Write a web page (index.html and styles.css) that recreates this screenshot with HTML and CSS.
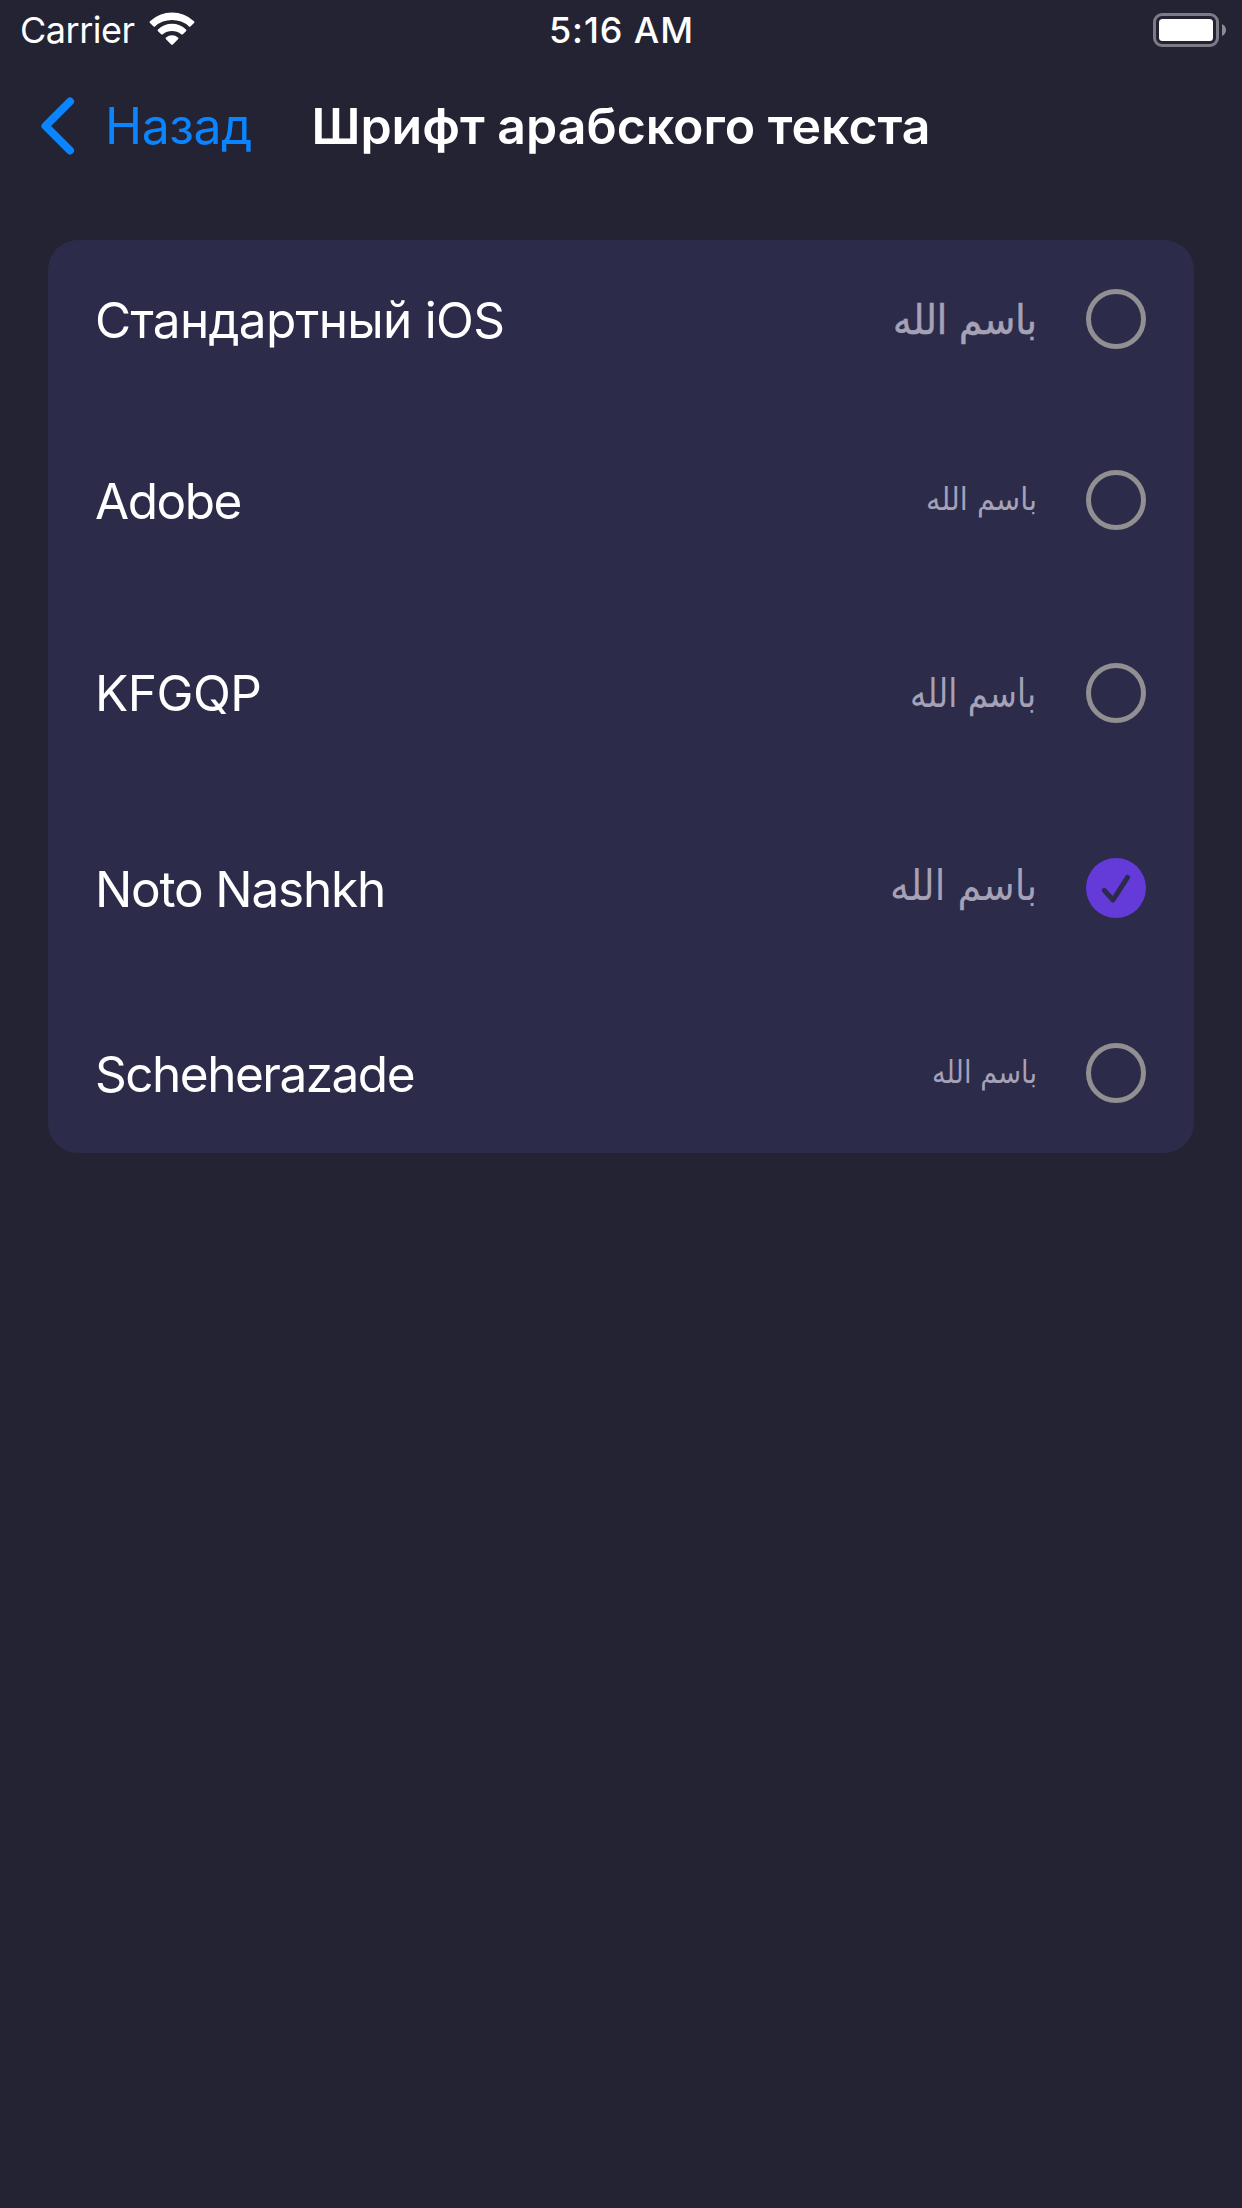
FILE: index.html
```html
<!DOCTYPE html>
<html lang="ru">
<head>
<meta charset="utf-8">
<title>Шрифт арабского текста</title>
<link rel="stylesheet" href="styles.css">
</head>
<body>
<header class="status">
  <div class="carrier">
    <span class="carrier-name">Carrier</span>
    <svg class="wifi" width="46" height="34" viewBox="0 0 46 34" fill="#fff">
      <path d="M1.0 9.2 Q0 10 1 11 L4.600 14.500 Q5.200 15 6 14.400 A25.500 25.500 0 0 1 40 14.400 Q40.800 15 41.400 14.500 L45 11 Q46 10 45 9.200 A32.500 32.500 0 0 0 1 9.200Z"/>
      <path d="M9 17.400 Q8.200 18.300 9 19.200 L12.200 22.200 Q13 22.800 13.800 22.200 A14.500 14.500 0 0 1 32.200 22.200 Q33 22.800 33.800 22.200 L37 19.200 Q37.800 18.300 37 17.400 A20.500 20.500 0 0 0 9 17.400Z"/>
      <path d="M17 25.500 Q16 26.300 17 27.300 L22.200 32.500 Q23 33.300 23.800 32.500 L29 27.300 Q30 26.300 29 25.500 A9.500 9.500 0 0 0 17 25.500Z"/>
    </svg>
  </div>
  <time class="clock">5:16 AM</time>
  <svg class="battery" width="73" height="34" viewBox="0 0 73 34">
    <rect x="1.500" y="1.500" width="63" height="31" rx="7.500" fill="none" stroke="#7d7b88" stroke-width="3"/>
    <rect x="6" y="6" width="54" height="22" rx="3.500" fill="#fff"/>
    <path d="M69 11 Q73 13 73 17 T69 23Z" fill="#8b8994"/>
  </svg>
</header>
<nav class="navbar">
  <a class="back">
    <svg class="chevron" width="36" height="60" viewBox="0 0 36 60"><path d="M31 5.500 L6.500 30 L31 54.500" fill="none" stroke="#0a84ff" stroke-width="8" stroke-linecap="round" stroke-linejoin="round"/></svg>
    <span class="back-label">Назад</span>
  </a>
  <h1 class="title">Шрифт арабского текста</h1>
</nav>
<main class="card">
  <div class="row row-ios">
    <span class="name">Стандартный iOS</span>
    <svg class="sample" width="150" height="80" viewBox="0 0 150 80"><text class="arabic heavy" x="147" y="54.500" font-size="41" textLength="144" lengthAdjust="spacingAndGlyphs">باسم الله</text></svg>
    <span class="radio"></span>
  </div>
  <div class="row row-adobe">
    <span class="name">Adobe</span>
    <svg class="sample" width="150" height="80" viewBox="0 0 150 80"><text class="arabic" x="147" y="49.500" font-size="31" textLength="111" lengthAdjust="spacingAndGlyphs">باسم الله</text></svg>
    <span class="radio"></span>
  </div>
  <div class="row row-kfgqp">
    <span class="name">KFGQP</span>
    <svg class="sample" width="150" height="80" viewBox="0 0 150 80"><text class="arabic" x="146" y="53.500" font-size="39" textLength="126" lengthAdjust="spacingAndGlyphs">باسم الله</text></svg>
    <span class="radio"></span>
  </div>
  <div class="row row-noto">
    <span class="name">Noto Nashkh</span>
    <svg class="sample" width="150" height="80" viewBox="0 0 150 80"><text class="arabic" x="147" y="51.500" font-size="42" textLength="147" lengthAdjust="spacingAndGlyphs">باسم الله</text></svg>
    <span class="radio checked"><svg width="60" height="60" viewBox="0 0 60 60"><path d="M18.300 32.300 L27 42 L41.500 19.300" fill="none" stroke="#2c2b49" stroke-width="5" stroke-linecap="round" stroke-linejoin="round"/></svg></span>
  </div>
  <div class="row row-scheherazade">
    <span class="name">Scheherazade</span>
    <svg class="sample" width="150" height="80" viewBox="0 0 150 80"><text class="arabic" x="147" y="49.500" font-size="31" textLength="105" lengthAdjust="spacingAndGlyphs">باسم الله</text></svg>
    <span class="radio"></span>
  </div>
</main>
</body>
</html>
```
FILE: styles.css
```css
* { box-sizing: border-box; }
body {
  margin: 0;
  min-height: 2208px;
  background: #242333;
  color: #fff;
  font-family: Inter, "Liberation Sans", sans-serif;
}
.status {
  height: 60px;
  display: grid;
  grid-template-columns: 1fr auto 1fr;
  align-items: center;
  font-size: 36px;
  line-height: 60px;
  padding: 0 16px 0 20px;
}
.carrier { display: flex; align-items: center; gap: 14px; }
.carrier-name { letter-spacing: -0.5px; }
.wifi { margin-top: -2px; }
.clock { font-weight: 500; letter-spacing: 0.9px; margin-right: 3px; }
.battery { justify-self: end; }
.navbar {
  height: 132px;
  display: grid;
  grid-template-columns: 1fr auto 1fr;
  align-items: center;
  padding: 0 39px;
}
.back { display: flex; align-items: center; gap: 30px; color: #0a84ff; }
.back-label { font-size: 50px; letter-spacing: -0.5px; }
.title { margin: 0; font-size: 50px; font-weight: 600; white-space: nowrap; }
.card {
  margin: 48px 48px 0;
  height: 913px;
  border-radius: 30px;
  background: #2c2b49;
}
.row { display: flex; align-items: center; padding: 0 48px 0 47px; }
.row-ios { height: 157px; }
.row-adobe { height: 206px; }
.row-kfgqp { height: 179px; }
.row-noto { height: 212px; }
.row-scheherazade { height: 158px; }
.name { flex: 1; padding-top: 2px; font-size: 49.5px; white-space: nowrap; }
.row-ios .name { letter-spacing: -0.7px; }
.row-adobe .name { letter-spacing: -1.5px; }
.row-kfgqp .name { padding-top: 0; letter-spacing: -0.5px; }
.row-noto .name { letter-spacing: -1.2px; }
.row-scheherazade .name { letter-spacing: -1.5px; }
.sample { margin-right: 46px; overflow: visible; }
.arabic {
  font-family: "DejaVu Sans", sans-serif;
  direction: rtl;
  fill: #a5a1b7;
}
.heavy { stroke: #a5a1b7; stroke-width: 0.6px; }
.radio { width: 60px; height: 60px; border: 5px solid #918f92; border-radius: 50%; }
.checked { border: 0; background: #643ad9; }
.checked svg { display: block; }
```
